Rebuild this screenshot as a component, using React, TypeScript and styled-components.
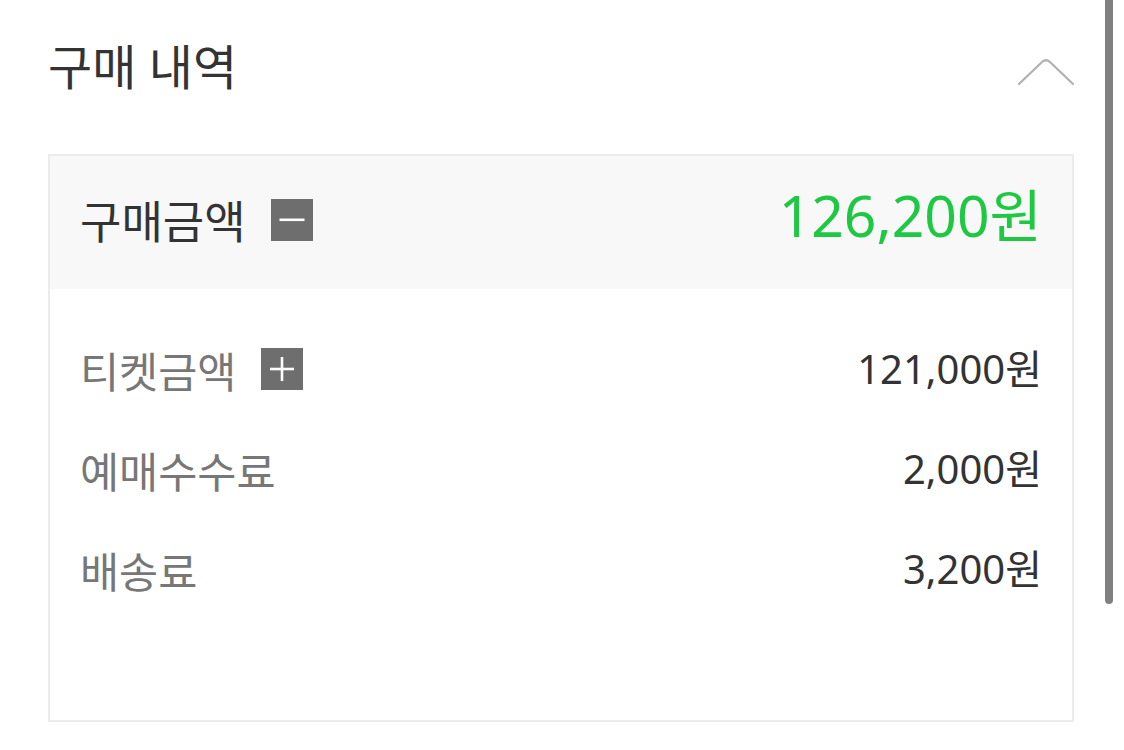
import React from "react";
import styled, { createGlobalStyle } from "styled-components";

const Global = createGlobalStyle`
  html, body { margin: 0; padding: 0; background: #ffffff; }
  body { font-family: "Noto Sans", "Noto Sans CJK KR", sans-serif; overflow: hidden; }
`;

const Page = styled.div`
  position: relative;
  width: 1124px;
  height: 750px;
  box-sizing: border-box;
  padding: 0 50px 0 48px;
`;

const TitleBar = styled.div`
  display: flex;
  align-items: center;
  justify-content: space-between;
  height: 154px;
  padding-bottom: 18px;
  box-sizing: border-box;
`;

const Title = styled.h2`
  margin: 0 0 8px;
  font-size: 48px;
  font-weight: 400;
  color: #333333;
`;

const Chevron = styled.svg`
  width: 58px;
  height: 34px;
  margin-right: -1px;
  margin-top: 8px;
`;

const Box = styled.div`
  border: 2px solid #ebebeb;
  height: 568px;
  box-sizing: border-box;
`;

const TotalRow = styled.div`
  display: flex;
  align-items: center;
  justify-content: space-between;
  height: 133px;
  padding: 0 30px 0 30px;
  background: #f8f8f8;
`;

const Label = styled.div<{ $muted?: boolean; $size: number; $lift?: number }>`
  display: flex;
  align-items: center;
  gap: 25px;
  font-size: ${(p) => p.$size}px;
  color: ${(p) => (p.$muted ? "#777777" : "#333333")};
  margin-bottom: ${(p) => (p.$lift ?? 0) * 2}px;
`;

const Toggle = styled.span`
  display: inline-flex;
  align-items: center;
  justify-content: center;
  width: 42px;
  height: 42px;
  background: #6e6e6e;
`;

const TotalValue = styled.div`
  font-size: 57px;
  color: #1ec843;
  margin-bottom: 20px;
`;

const Rows = styled.div`
  display: flex;
  flex-direction: column;
  padding: 30px 30px 0 30px;
`;

const Row = styled.div`
  display: flex;
  align-items: center;
  justify-content: space-between;
  height: 100px;
`;

const Value = styled.div`
  font-size: 40px;
  color: #333333;
  margin-bottom: 4px;
`;

const Scrollbar = styled.div`
  position: absolute;
  top: -6px;
  right: 11px;
  width: 8px;
  height: 610px;
  border-radius: 4px;
  background: #808080;
`;

const Minus = () => (
  <svg width="42" height="42" viewBox="0 0 42 42">
    <rect x="8.5" y="19.5" width="25" height="2.6" fill="#fff" />
  </svg>
);

const Plus = () => (
  <svg width="42" height="42" viewBox="0 0 42 42">
    <rect x="9" y="19.7" width="24" height="2.6" fill="#fff" />
    <rect x="19.7" y="9" width="2.6" height="24" fill="#fff" />
  </svg>
);

const rows = [
  { label: "티켓금액", value: "121,000원", toggle: true },
  { label: "예매수수료", value: "2,000원" },
  { label: "배송료", value: "3,200원" },
];

export default function App() {
  return (
    <>
      <Global />
      <Page>
        <TitleBar>
          <Title>구매 내역</Title>
          <Chevron viewBox="0 0 58 34">
            <path
              d="M2 29 L25 7 Q29 3.5 33 7 L56 29"
              fill="none"
              stroke="#b0b0b0"
              strokeWidth="2.2"
              strokeLinecap="round"
            />
          </Chevron>
        </TitleBar>
        <Box>
          <TotalRow>
            <Label $size={45} $lift={3}>
              구매금액
              <Toggle>
                <Minus />
              </Toggle>
            </Label>
            <TotalValue>126,200원</TotalValue>
          </TotalRow>
          <Rows>
            {rows.map((r) => (
              <Row key={r.label}>
                <Label $muted $size={42.5}>
                  {r.label}
                  {r.toggle && (
                    <Toggle>
                      <Plus />
                    </Toggle>
                  )}
                </Label>
                <Value>{r.value}</Value>
              </Row>
            ))}
          </Rows>
        </Box>
        <Scrollbar />
      </Page>
    </>
  );
}
